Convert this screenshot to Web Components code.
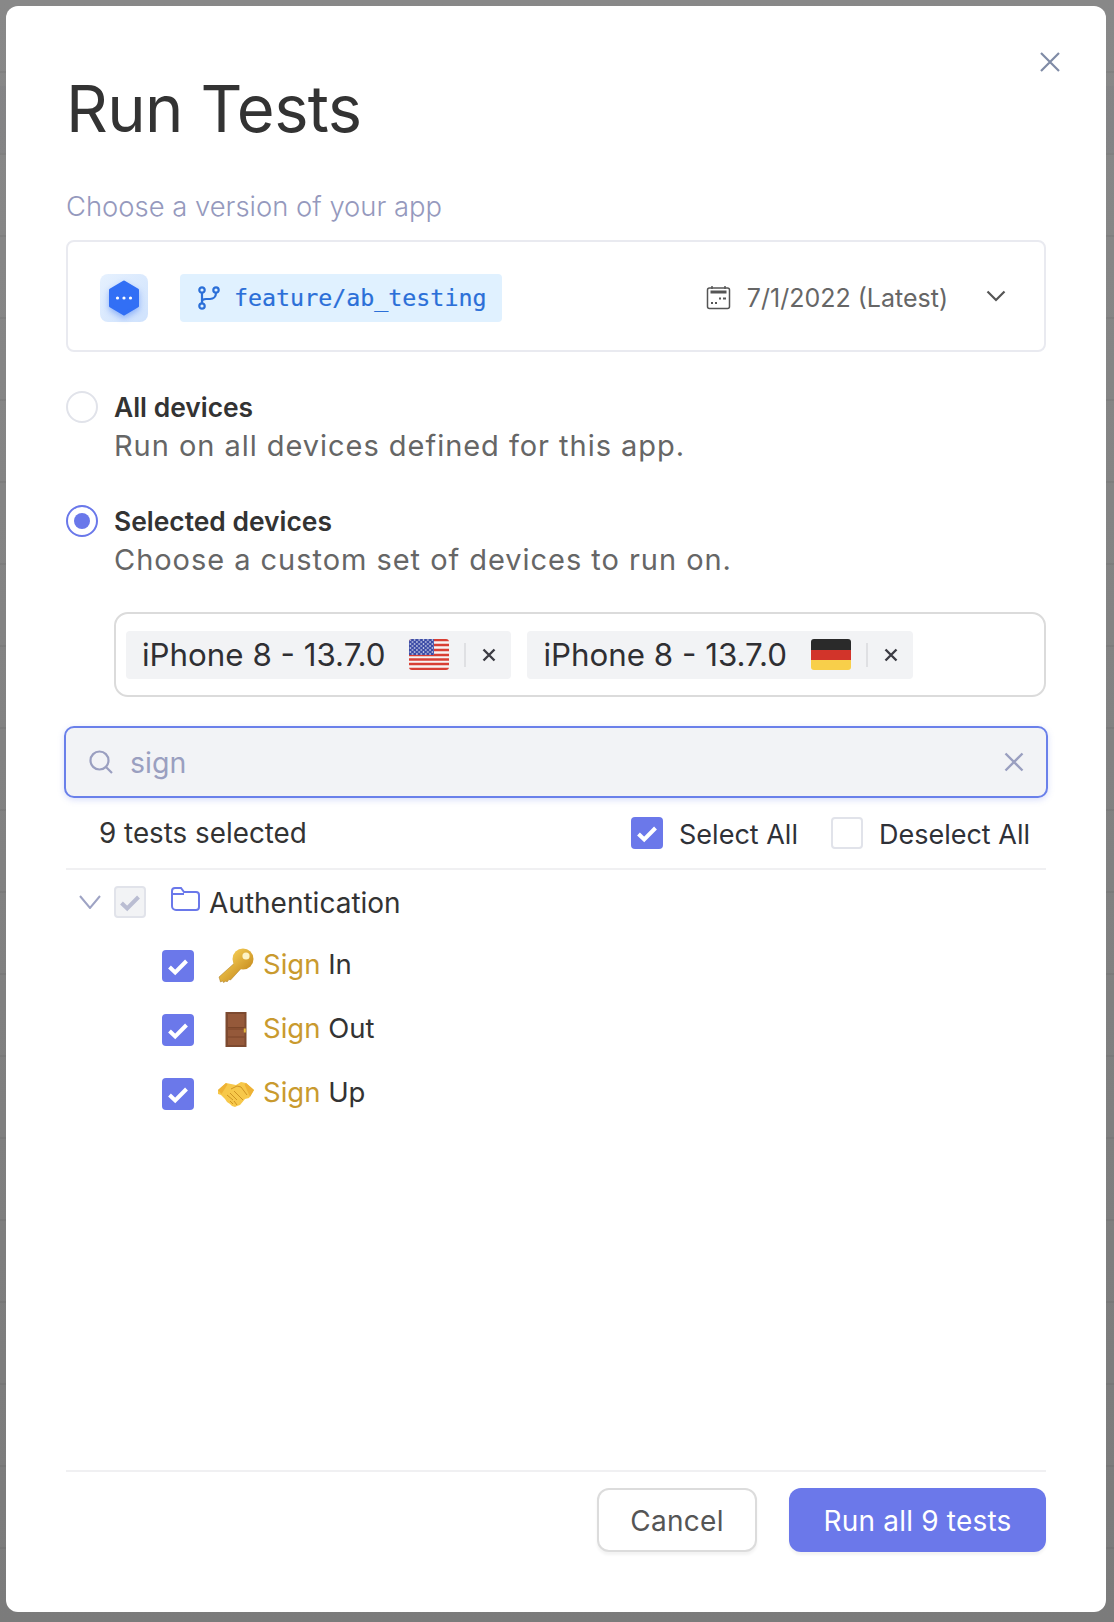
<!DOCTYPE html>
<html>
<head>
<meta charset="utf-8">
<title>Run Tests</title>
<style>
    html, body {
        margin: 0;
        height: 100%;
    }
    body {
        box-sizing: border-box;
        padding: 6px 8px 10px 6px;
        background:
            linear-gradient(rgba(90,90,110,.07), rgba(90,90,110,.07)) 0 86px / 100% 67px no-repeat,
            repeating-linear-gradient(transparent 0 71px, rgba(0,0,0,.05) 71px 73px, transparent 73px 82px),
            linear-gradient(#888888, #7b7b7b);
        font-family: Inter, "Liberation Sans", sans-serif;
    }
</style>
</head>
<body>
<run-tests-modal>
    <version-picker branch="feature/ab_testing" date="7/1/2022 (Latest)"></version-picker>
    <device-radio label="All devices" hint="Run on all devices defined for this app."></device-radio>
    <device-radio checked label="Selected devices" hint="Choose a custom set of devices to run on."></device-radio>
    <device-chips>
        <device-chip flag="us">iPhone 8 - 13.7.0</device-chip>
        <device-chip flag="de">iPhone 8 - 13.7.0</device-chip>
    </device-chips>
    <search-box value="sign"></search-box>
    <select-bar></select-bar>
    <test-tree>
        <test-row match="Sign" rest=" In" emoji="key"></test-row>
        <test-row match="Sign" rest=" Out" emoji="door"></test-row>
        <test-row match="Sign" rest=" Up" emoji="hands"></test-row>
    </test-tree>
    <modal-footer></modal-footer>
</run-tests-modal>

<script>
(function(){
    const CHECK = '<svg viewBox="0 0 32 32" width="32" height="32"><path d="M7.500 17l5.700 5.500L24.500 11" fill="none" stroke="currentColor" stroke-width="4"/></svg>';
    const CROSS = '<svg viewBox="0 0 24 24" width="24" height="24"><path d="M3 3l18 18M21 3L3 21" fill="none" stroke="currentColor" stroke-width="2.200"/></svg>';

    const EMOJI = {
        key: `<svg viewBox="0 0 36 36" width="36" height="36">
            <defs><linearGradient id="k" x1="0" y1="0" x2="1" y2="1"><stop offset="0" stop-color="#f6cf57"/><stop offset="1" stop-color="#c68a1c"/></linearGradient></defs>
            <path d="M21 11L1 29l1.500 5 2-1 1 1.500 2.500-1.500 1 1 2-2.500 1.500.5 12-13z" fill="url(#k)" stroke="#a9781f" stroke-width=".5"/>
            <circle cx="25" cy="11" r="10.500" fill="url(#k)"/>
            <circle cx="28" cy="8" r="3.600" fill="#fdf3c6"/>
        </svg>`,
        door: `<svg viewBox="0 0 36 36" width="36" height="36">
            <rect x="7.500" y="0" width="21" height="35" fill="#7d4a30"/>
            <rect x="10" y="2" width="16.500" height="31" fill="#95593a"/>
            <path d="M10 15.500h16.500M10 17h16.500M10 25h16.500" stroke="#7a4529" stroke-width="1"/>
            <rect x="25.800" y="16.500" width="2" height="4" fill="#e6b93f"/>
        </svg>`,
        hands: `<svg viewBox="0 0 36 26" width="36" height="26">
            <path d="M0 9L8 2l5 1 5 1 5-3 5 1 8 7-5 8-4 1-5 6-3 1-2 1-3-1-2-2-3-2-2-3-4-4-3-1z" fill="#f7c84a"/>
            <path d="M0 9L8 2l1.500 1.500L3.500 13zM36 9l-8-7-1.500 1.500L32 16z" fill="#eeb235"/>
            <path d="M9 14l6 5M12 12l7 7M16 10l6 6 3 3M13 8l6-3 4 1 6 8M12 20l3 3M16 20l3 4" fill="none" stroke="#cf9423" stroke-width="1"/>
        </svg>`
    };

    const FLAGS = {
        us: `<svg viewBox="0 0 40 31" width="40" height="31" style="border-radius:3px;display:block">
            <defs><pattern id="stars" width="4.400" height="4" patternUnits="userSpaceOnUse"><circle cx="1.300" cy="1" r=".8" fill="#fff"/><circle cx="3.500" cy="3" r=".8" fill="#fff"/></pattern></defs>
            <rect width="40" height="31" fill="#f7f4f3"/>
            <path d="M0 1h40M0 6h40M0 11h40M0 16h40M0 20.500h40M0 25h40M0 30h40" stroke="#d83f34" stroke-width="2.400"/>
            <rect width="25" height="16" fill="#3c4ca6"/><rect width="25" height="16" fill="url(#stars)"/>
        </svg>`,
        de: `<svg viewBox="0 0 40 31" width="40" height="31" style="border-radius:3px;display:block">
            <rect width="40" height="11" fill="#2a2a2a"/><rect y="11" width="40" height="10" fill="#d2342a"/><rect y="21" width="40" height="10" fill="#f8cf4a"/>
        </svg>`
    };

    class RunTestsModal extends HTMLElement {
        constructor() {
            super();
            this.attachShadow({mode: 'open'}).innerHTML = `
                <style>
                    :host {
                        display: flex;
                        flex-direction: column;
                        box-sizing: border-box;
                        height: 100%;
                        padding: 0 60px;
                        position: relative;
                        background: #fff;
                        border-radius: 12px;
                    }
                    h1 {
                        margin: 0;
                        padding-top: 65px;
                        font-size: 65px;
                        line-height: 76px;
                        font-weight: 400;
                        letter-spacing: -.6px;
                        color: #333;
                    }
                    .caption {
                        margin-top: 43px;
                        margin-bottom: 18px;
                        font-size: 27.400px;
                        line-height: 32px;
                        font-weight: 300;
                        color: #9599bd;
                    }
                    .close {
                        position: absolute;
                        top: 44px;
                        right: 44px;
                        color: #7f8ba6;
                    }
                </style>
                <div class="close">${CROSS}</div>
                <h1>Run Tests</h1>
                <div class="caption">Choose a version of your app</div>
                <slot></slot>`;
        }
    }

    class VersionPicker extends HTMLElement {
        connectedCallback() {
            this.attachShadow({mode: 'open'}).innerHTML = `
                <style>
                    :host {
                        display: flex;
                        align-items: center;
                        box-sizing: border-box;
                        height: 112px;
                        padding: 3px 38px 0 32px;
                        border: 2px solid #e9eaf0;
                        border-radius: 8px;
                    }
                    .app {
                        width: 48px;
                        height: 48px;
                        border-radius: 8px;
                        background: linear-gradient(135deg, #e6f1fe, #cfe2fd);
                        display: flex;
                        align-items: center;
                        justify-content: center;
                    }
                    .branch {
                        display: flex;
                        align-items: center;
                        height: 48px;
                        box-sizing: border-box;
                        margin-left: 32px;
                        padding: 0 16px 0 18px;
                        gap: 14px;
                        background: #e0f1ff;
                        border-radius: 4px;
                        color: #2b6fd8;
                        font: 23.300px "DejaVu Sans Mono", monospace;
                        -webkit-text-stroke: .2px currentColor;
                    }
                    .date {
                        display: flex;
                        align-items: center;
                        gap: 16px;
                        margin-left: auto;
                        font-size: 25px;
                        color: #666;
                    }
                    .chev { margin-left: 38px; color: #555; margin-top: -4px; }
                    svg { display: block; }
                </style>
                <div class="app">
                    <svg viewBox="0 0 32 36" width="32" height="36" style="filter:drop-shadow(0 3px 3px rgba(50,110,245,.45))">
                        <path d="M16 2l13.500 8v16L16 34 2.500 26V10z" fill="#326ff5" stroke="#326ff5" stroke-width="3" stroke-linejoin="round"/>
                        <g fill="#fff"><circle cx="9.500" cy="18" r="1.600"/><circle cx="16" cy="18" r="1.600"/><circle cx="22.500" cy="18" r="1.600"/></g>
                    </svg>
                </div>
                <div class="branch">
                    <svg viewBox="0 0 22 24" width="22" height="24" fill="none" stroke="currentColor" stroke-width="2.200">
                        <circle cx="4" cy="4" r="2.700"/><circle cx="4" cy="20" r="2.700"/><circle cx="18" cy="4" r="2.700"/>
                        <path d="M4 6.700v10.600M18 6.700c0 4-2.500 6.300-6 6.300H8c-2.500 0-4 1-4 3"/>
                    </svg>
                    <span>${this.getAttribute('branch')}</span>
                </div>
                <div class="date">
                    <svg viewBox="0 0 25 25" width="25" height="25" fill="none" stroke="#555" stroke-width="1.500">
                        <rect x="1.500" y="3" width="22" height="20.500" rx="2"/>
                        <path d="M6 1v3M19 1v3"/>
                        <path d="M4.500 7h16" stroke-width="3"/>
                        <path d="M5 18h2M9 18h2M13 13.500h2M17 13.500h3" stroke-width="2.200"/>
                    </svg>
                    <span>${this.getAttribute('date')}</span>
                </div>
                <div class="chev">
                    <svg viewBox="0 0 20 12" width="20" height="12" fill="none" stroke="currentColor" stroke-width="2.200"><path d="M1.500 1.500L10 10l8.500-8.500"/></svg>
                </div>`;
        }
    }

    class DeviceRadio extends HTMLElement {
        connectedCallback() {
            const checked = this.hasAttribute('checked');
            this.attachShadow({mode: 'open'}).innerHTML = `
                <style>
                    :host {
                        display: flex;
                        gap: 16px;
                        margin-top: 39px;
                    }
                    :host([checked]) { margin-top: 42px; }
                    .dot {
                        box-sizing: border-box;
                        flex: none;
                        width: 32px;
                        height: 32px;
                        border-radius: 50%;
                        border: 2px solid ${checked ? '#6a78ea' : '#e1e3ea'};
                        display: flex;
                        align-items: center;
                        justify-content: center;
                    }
                    .dot i {
                        display: ${checked ? 'block' : 'none'};
                        width: 16px;
                        height: 16px;
                        border-radius: 50%;
                        background: #6a78ea;
                    }
                    .label {
                        font-size: 26.400px;
                        line-height: 32px;
                        font-weight: 600;
                        color: #333;
                    }
                    .hint {
                        margin-top: 6px;
                        font-size: 29px;
                        line-height: 34px;
                        letter-spacing: .96px;
                        color: #666;
                    }
                </style>
                <div class="dot"><i></i></div>
                <div>
                    <div class="label">${this.getAttribute('label')}</div>
                    <div class="hint">${this.getAttribute('hint')}</div>
                </div>`;
        }
    }

    class DeviceChips extends HTMLElement {
        constructor() {
            super();
            this.attachShadow({mode: 'open'}).innerHTML = `
                <style>
                    :host {
                        display: flex;
                        gap: 16px;
                        align-items: center;
                        box-sizing: border-box;
                        height: 85px;
                        margin: 35px 0 29px 48px;
                        padding: 0 10px;
                        border: 2px solid #dbdbdb;
                        border-radius: 14px;
                    }
                </style>
                <slot></slot>`;
        }
    }

    class DeviceChip extends HTMLElement {
        connectedCallback() {
            this.attachShadow({mode: 'open'}).innerHTML = `
                <style>
                    :host {
                        display: flex;
                        align-items: center;
                        box-sizing: border-box;
                        height: 48px;
                        padding: 0 15px 0 16px;
                        background: #f2f3f5;
                        border-radius: 4px;
                        font-size: 31.300px;
                        color: #2f2f33;
                    }
                    .flag { margin-left: 24px; }
                    .sep { width: 2px; height: 24px; margin: 0 16px 0 15px; background: #dfe0e3; }
                    .x { color: #3c3c44; display: flex; }
                </style>
                <slot></slot>
                <div class="flag">${FLAGS[this.getAttribute('flag')]}</div>
                <div class="sep"></div>
                <div class="x"><svg viewBox="0 0 14 14" width="14" height="14"><path d="M1.500 1.500l11 11M12.500 1.500l-11 11" stroke="currentColor" stroke-width="2.400"/></svg></div>`;
        }
    }

    class SearchBox extends HTMLElement {
        connectedCallback() {
            this.attachShadow({mode: 'open'}).innerHTML = `
                <style>
                    :host {
                        display: flex;
                        align-items: center;
                        box-sizing: border-box;
                        height: 72px;
                        margin: 0 -2px;
                        padding: 0 22px 0 23px;
                        gap: 17px;
                        background: #f2f3f6;
                        border: 2px solid #6a80ea;
                        border-radius: 10px;
                        box-shadow: 0 2px 6px rgba(106,128,234,.25);
                        font-size: 28.500px;
                        color: #9a9fc0;
                    }
                    .x { margin-left: auto; display: flex; }
                    svg { display: block; }
                </style>
                <svg viewBox="0 0 24 24" width="24" height="24" fill="none" stroke="currentColor" stroke-width="2.200"><circle cx="10.500" cy="10.500" r="9"/><path d="M17 17l6 6"/></svg>
                <span>${this.getAttribute('value')}</span>
                <div class="x"><svg viewBox="0 0 20 20" width="20" height="20"><path d="M1.500 1.500l17 17M18.500 1.500l-17 17" fill="none" stroke="currentColor" stroke-width="2.400"/></svg></div>`;
        }
    }

    class TickBox extends HTMLElement {
        connectedCallback() {
            const state = this.getAttribute('state') || 'off';
            this.attachShadow({mode: 'open'}).innerHTML = `
                <style>
                    :host {
                        display: block;
                        flex: none;
                        box-sizing: border-box;
                        width: 32px;
                        height: 32px;
                        border-radius: 4px;
                    }
                    :host([state="on"]) { background: #6b78ea; color: #fff; }
                    :host([state="off"]) { border: 2px solid #e1e3ea; background: #fff; }
                    :host([state="mixed"]) { border: 2px solid #e1e3ea; background: #f2f3f5; color: #babdd2; }
                    svg { display: block; }
                    :host([state="mixed"]) svg { margin: -2px; }
                </style>
                ${state === 'off' ? '' : CHECK}`;
        }
    }

    class SelectBar extends HTMLElement {
        constructor() {
            super();
            this.attachShadow({mode: 'open'}).innerHTML = `
                <style>
                    :host {
                        display: flex;
                        align-items: center;
                        box-sizing: border-box;
                        height: 72px;
                        padding: 0 16px 0 33px;
                        border-bottom: 2px solid #f0f0f2;
                        font-size: 27.800px;
                        color: #333;
                    }
                    .pick { display: flex; align-items: center; gap: 16px; color: #2f3138; font-size: 27px; }
                    .pick span { padding-top: 3px; }
                    .count { margin-right: auto; }
                    .pick + .pick { margin-left: 33px; }
                </style>
                <div class="count">9 tests selected</div>
                <div class="pick"><tick-box state="on"></tick-box><span>Select All</span></div>
                <div class="pick"><tick-box state="off"></tick-box><span>Deselect All</span></div>`;
        }
    }

    class TestTree extends HTMLElement {
        constructor() {
            super();
            this.attachShadow({mode: 'open'}).innerHTML = `
                <style>
                    :host {
                        display: flex;
                        flex-direction: column;
                        flex: 1;
                        font-size: 28px;
                        color: #333;
                    }
                    .root {
                        display: flex;
                        align-items: center;
                        height: 32px;
                        margin-top: 16px;
                        margin-bottom: 32px;
                        padding-left: 13px;
                    }
                    .root span { padding-top: 2px; }
                    .chev { color: #9ea3c4; margin-right: 13px; display: flex; }
                    .folder { margin: -6px 8px 0 25px; display: flex; }
                    .rows { display: flex; flex-direction: column; gap: 32px; padding-left: 96px; }
                </style>
                <div class="root">
                    <div class="chev"><svg viewBox="0 0 22 14" width="22" height="14" fill="none" stroke="currentColor" stroke-width="2"><path d="M1 1l10 12L21 1"/></svg></div>
                    <tick-box state="mixed"></tick-box>
                    <div class="folder"><svg viewBox="0 0 30 26" width="30" height="26" fill="none" stroke="#6a78ea" stroke-width="2"><path d="M1 5a3 3 0 0 1 3-3h6l3 4h12a3 3 0 0 1 3 3v12a3 3 0 0 1-3 3H5a4 4 0 0 1-4-4zM1 8h12"/></svg></div>
                    <span>Authentication</span>
                </div>
                <div class="rows"><slot></slot></div>`;
        }
    }

    class TestRow extends HTMLElement {
        connectedCallback() {
            this.attachShadow({mode: 'open'}).innerHTML = `
                <style>
                    :host {
                        display: flex;
                        align-items: center;
                        height: 32px;
                        font-size: 27.500px;
                        color: #333;
                    }
                    .emoji { width: 36px; margin: 0 9px 0 24px; display: flex; justify-content: center; }
                    .hit { color: #c99a2e; }
                    span { white-space: pre; }
                    .name { margin-top: -4px; }
                </style>
                <tick-box state="on"></tick-box>
                <div class="emoji">${EMOJI[this.getAttribute('emoji')]}</div>
                <span class="name"><span class="hit">${this.getAttribute('match')}</span>${this.getAttribute('rest')}</span>`;
        }
    }

    class ModalFooter extends HTMLElement {
        constructor() {
            super();
            this.attachShadow({mode: 'open'}).innerHTML = `
                <style>
                    :host {
                        display: flex;
                        justify-content: flex-end;
                        gap: 32px;
                        padding: 16px 0 60px;
                        border-top: 2px solid #f0f0f2;
                    }
                    button {
                        box-sizing: border-box;
                        height: 64px;
                        padding: 2px 0 0;
                        border-radius: 12px;
                        font: 28px Inter, "Liberation Sans", sans-serif;
                        box-shadow: 0 3px 3px rgba(0,0,0,.05);
                    }
                    .cancel { width: 160px; background: #fff; border: 2px solid #dcdcdc; color: #555; letter-spacing: .3px; }
                    .run { width: 257px; background: #6b78ea; border: 0; color: #fff; letter-spacing: .2px; }
                </style>
                <button class="cancel">Cancel</button>
                <button class="run">Run all 9 tests</button>`;
        }
    }

    window.customElements.define('run-tests-modal', RunTestsModal);
    window.customElements.define('version-picker', VersionPicker);
    window.customElements.define('device-radio', DeviceRadio);
    window.customElements.define('device-chips', DeviceChips);
    window.customElements.define('device-chip', DeviceChip);
    window.customElements.define('search-box', SearchBox);
    window.customElements.define('tick-box', TickBox);
    window.customElements.define('select-bar', SelectBar);
    window.customElements.define('test-tree', TestTree);
    window.customElements.define('test-row', TestRow);
    window.customElements.define('modal-footer', ModalFooter);
})();
</script>
</body>
</html>
